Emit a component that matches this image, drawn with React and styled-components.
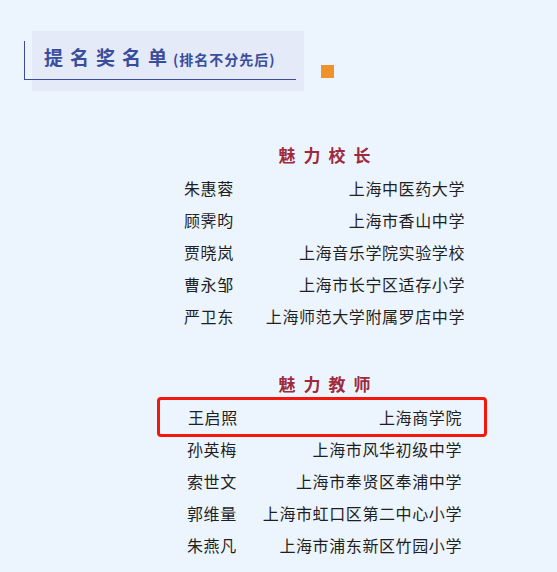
import React from 'react';
import styled, { createGlobalStyle } from 'styled-components';

const GlobalStyle = createGlobalStyle`
    html, body {
        margin: 0;
        padding: 0;
        background: #ecf5fe;
    }
    body {
        font-family: 'Noto Sans CJK SC', 'Noto Sans', sans-serif;
        color: #1f1f1f;
    }
`;

const Page = styled.div`
    padding-top: 31px;
    min-height: 541px;
`;

// 상단 제목 영역
const Header = styled.div`
    display: flex;
    align-items: flex-start;
`;

const TitleBox = styled.div`
    position: relative;
    margin-left: 32px;
    width: 272px;
    height: 60px;
    box-sizing: border-box;
    padding: 14px 12px 0;
    background: #e4eaf7;
    display: flex;
    align-items: baseline;

    &::before {
        content: '';
        position: absolute;
        left: -8px;
        top: 10px;
        width: 272px;
        height: 39px;
        box-sizing: border-box;
        border-left: 1.5px solid #3a4d9e;
        border-bottom: 1.5px solid #3a4d9e;
    }
`;

const Title = styled.span`
    font-size: 19px;
    font-weight: 700;
    letter-spacing: 7px;
    line-height: 24px;
    color: #3a4d9c;
`;

const SubTitle = styled.span`
    margin-left: -1px;
    font-size: 14px;
    font-weight: 700;
    letter-spacing: 1px;
    line-height: 24px;
    color: #3a4d9c;
`;

const Square = styled.div`
    width: 13px;
    height: 13px;
    margin: 34px 0 0 17px;
    background: #ef922c;
`;

// 명단 영역
const List = styled.div`
    margin-left: 184px;
    width: 281px;
`;

const Section = styled.section`
    margin-top: ${p => p.$top}px;
`;

const Heading = styled.h3`
    margin: 0 0 5px;
    padding-left: 8px;
    text-align: center;
    font-size: 17px;
    font-weight: 700;
    line-height: 24px;
    letter-spacing: 8px;
    color: #9e2a3c;
`;

const Row = styled.div`
    display: flex;
    justify-content: space-between;
    align-items: center;
    height: 32px;
    box-sizing: border-box;
    padding: 0 ${p => p.$inset}px;
    font-size: 16px;
    letter-spacing: 0.6px;
    line-height: 32px;
`;

const MarkedRow = styled(Row)`
    height: 40px;
    margin: -4px -22px -4px -27px;
    padding: 0 22px 0 28px;
    border: 3px solid #f5160c;
    border-radius: 4px;
`;

const principals = [
    ['朱惠蓉', '上海中医药大学'],
    ['顾霁昀', '上海市香山中学'],
    ['贾晓岚', '上海音乐学院实验学校'],
    ['曹永邹', '上海市长宁区适存小学'],
    ['严卫东', '上海师范大学附属罗店中学'],
];

const teachers = [
    ['王启照', '上海商学院'],
    ['孙英梅', '上海市风华初级中学'],
    ['索世文', '上海市奉贤区奉浦中学'],
    ['郭维量', '上海市虹口区第二中心小学'],
    ['朱燕凡', '上海市浦东新区竹园小学'],
];

const App = () => (
    <Page>
        <GlobalStyle />
        <Header>
            <TitleBox>
                <Title>提名奖名单</Title>
                <SubTitle>(排名不分先后)</SubTitle>
            </TitleBox>
            <Square />
        </Header>
        <List>
            <Section $top={52}>
                <Heading>魅力校长</Heading>
                {principals.map(([name, school]) => (
                    <Row key={name} $inset={0}>
                        <span>{name}</span>
                        <span>{school}</span>
                    </Row>
                ))}
            </Section>
            <Section $top={40}>
                <Heading>魅力教师</Heading>
                {teachers.map(([name, school], i) => {
                    const R = i === 0 ? MarkedRow : Row;
                    return (
                        <R key={name} $inset={3}>
                            <span>{name}</span>
                            <span>{school}</span>
                        </R>
                    );
                })}
            </Section>
        </List>
    </Page>
);

export default App;
